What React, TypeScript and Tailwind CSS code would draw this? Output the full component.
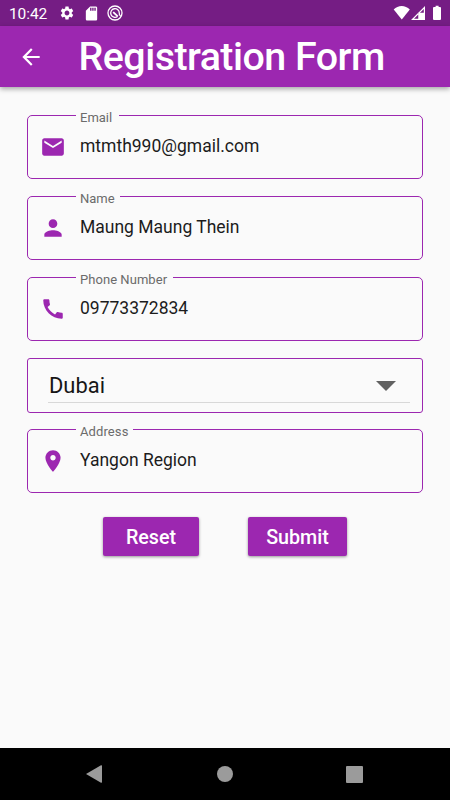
import type { ReactNode } from "react";

const icons = {
  mail: "M20 4H4c-1.1 0-1.99.9-1.99 2L2 18c0 1.1.9 2 2 2h16c1.1 0 2-.9 2-2V6c0-1.1-.9-2-2-2zm0 4l-8 5-8-5V6l8 5 8-5v2z",
  person: "M12 12c2.21 0 4-1.79 4-4s-1.79-4-4-4-4 1.79-4 4 1.79 4 4 4zm0 2c-2.67 0-8 1.34-8 4v2h16v-2c0-2.66-5.33-4-8-4z",
  phone: "M20.01 15.38c-1.23 0-2.42-.2-3.53-.56-.35-.12-.74-.03-1.01.24l-1.57 1.97c-2.83-1.35-5.48-3.9-6.89-6.83l1.95-1.66c.27-.28.35-.67.24-1.02-.37-1.11-.56-2.3-.56-3.53 0-.54-.45-.99-.99-.99H4.19C3.65 3 3 3.24 3 3.99 3 13.28 10.73 21 20.01 21c.71 0 .99-.63.99-1.18v-3.45c0-.54-.45-.99-.99-.99z",
  place: "M12 2C8.13 2 5 5.13 5 9c0 5.25 7 13 7 13s7-7.75 7-13c0-3.87-3.13-7-7-7zm0 9.5c-1.38 0-2.5-1.12-2.5-2.5s1.12-2.5 2.5-2.5 2.5 1.12 2.5 2.5-1.12 2.5-2.5 2.5z",
  back: "M20 11H7.83l5.59-5.59L12 4l-8 8 8 8 1.41-1.41L7.83 13H20v-2z",
  gear: "M19.14 12.94c.04-.3.06-.61.06-.94 0-.32-.02-.64-.07-.94l2.03-1.58c.18-.14.23-.41.12-.61l-1.92-3.32c-.12-.22-.37-.29-.59-.22l-2.39.96c-.5-.38-1.03-.7-1.62-.94l-.36-2.54c-.04-.24-.24-.41-.48-.41h-3.84c-.24 0-.43.17-.47.41l-.36 2.54c-.59.24-1.13.57-1.62.94l-2.39-.96c-.22-.08-.47 0-.59.22L2.74 8.87c-.12.21-.08.47.12.61l2.03 1.58c-.05.3-.09.63-.09.94s.02.64.07.94l-2.03 1.58c-.18.14-.23.41-.12.61l1.92 3.32c.12.22.37.29.59.22l2.39-.96c.5.38 1.03.7 1.62.94l.36 2.54c.05.24.24.41.48.41h3.84c.24 0 .44-.17.47-.41l.36-2.54c.59-.24 1.13-.56 1.62-.94l2.39.96c.22.08.47 0 .59-.22l1.92-3.32c.12-.22.07-.47-.12-.61l-2.01-1.58zM12 15.6c-1.98 0-3.6-1.62-3.6-3.6s1.62-3.6 3.6-3.6 3.6 1.62 3.6 3.6-1.62 3.6-3.6 3.6z",
  sd: "M18 2h-8L4.02 8 4 20c0 1.1.9 2 2 2h12c1.1 0 2-.9 2-2V4c0-1.1-.9-2-2-2zm-6 6h-2V4h2v4zm3 0h-2V4h2v4zm3 0h-2V4h2v4z",
};

function Icon({ d, className }: { d: string; className: string }) {
  return (
    <svg viewBox="0 0 24 24" fill="currentColor" className={`shrink-0 ${className}`}>
      <path d={d} />
    </svg>
  );
}

function Field({ label, labelClass, icon, children }: { label: string; labelClass: string; icon: string; children: ReactNode }) {
  return (
    <div className="relative flex h-16 items-start rounded-[5px] border border-[#9c27b0] pl-3">
      <span className={`absolute -top-1.5 left-12 h-4 whitespace-nowrap bg-[#fafafa] pl-1 text-[13px] leading-4 text-[#6b6b6b] ${labelClass}`}>
        {label}
      </span>
      <Icon d={icon} className="mt-[18px] size-[26px] text-[#9c27b0]" />
      <div className="ml-[14px] mt-[18px] text-[17.5px] leading-6 text-[#1c1c1c]">{children}</div>
    </div>
  );
}

function StatusBar() {
  return (
    <div className="flex h-[26px] items-center bg-[#751d84] pl-[9px] text-white">
      <span className="w-[50px] pt-[2px] text-[15.5px] leading-5 tracking-[-0.1px]">10:42</span>
      <Icon d={icons.gear} className="size-4" />
      <Icon d={icons.sd} className="ml-2 size-[17px]" />
      <svg viewBox="0 0 16 16" className="ml-[7px] size-4" fill="none" stroke="white">
        <circle cx="8" cy="8" r="7" strokeWidth="1.3" />
        <path d="M10.5 11.5A4.300 4.300 0 1 1 12.300 8.200Q12 10 13.600 11" strokeWidth="1.300" />
        <path d="M6.200 7.200l4.600 4.200" strokeWidth="1.800" />
      </svg>
      <svg viewBox="0 0 50 16" className="ml-auto mr-[7px] h-4 w-[50px]" fill="white">
        <path d="M.7 4.5C5-.2 12.300-.2 16.800 4.500L8.800 14.400Z" />
        <path fillRule="evenodd" d="M32 1v14H18zM30.800 3.900L21 13.700h4.500V8.200h5.300z" />
        <path fillRule="evenodd" d="M25.500 7.700h6.500V15h-6.500zM26.900 9v4.700h3.700V9z" />
        <path d="M42 2h1.600V.8h3V2H48q1 0 1 1v11q0 1-1 1h-6q-1 0-1-1V3q0-1 1-1Z" transform="translate(-1 0)" />
      </svg>
    </div>
  );
}

export default function App() {
  return (
    <div className="flex h-[800px] w-[450px] flex-col overflow-hidden bg-[#fafafa] font-[Roboto,sans-serif]">
      <StatusBar />
      <header className="flex h-[61px] shrink-0 items-center bg-[#9c27b0] pl-[18px] text-white shadow-[0_2px_5px_rgba(0,0,0,0.35)]">
        <Icon d={icons.back} className="size-[26px]" />
        <h1 className="ml-[34.5px] whitespace-nowrap text-[39.4px] font-medium leading-[60px] tracking-[-0.53px]">Registration Form</h1>
      </header>

      <main className="flex flex-1 flex-col px-[27px] pt-7">
        <div className="flex flex-col gap-[17px]">
          <Field label="Email" labelClass="w-[43px]" icon={icons.mail}>mtmth990@gmail.com</Field>
          <Field label="Name" labelClass="w-[44px]" icon={icons.person}>Maung Maung Thein</Field>
          <Field label="Phone Number" labelClass="w-[97px] tracking-[0.05px]" icon={icons.phone}>09773372834</Field>
        </div>
        <div className="mt-[17px] h-[55px] rounded-[3px] border border-[#9c27b0] pl-5 pr-3">
          <div className="flex h-11 items-center justify-between border-b border-[#d8d8d8] pr-[14px]">
            <span className="pl-px pt-[11px] text-[21.9px] leading-8 text-[#161616]">Dubai</span>
            <svg viewBox="0 0 20 10" className="mt-[11px] h-[10px] w-5" fill="#616161">
              <path d="M0 0h20L10 10z" />
            </svg>
          </div>
        </div>
        <div className="mt-4">
          <Field label="Address" labelClass="w-[57px] tracking-[0.1px]" icon={icons.place}>Yangon Region</Field>
        </div>
        <div className="mt-6 flex gap-[49px] pl-[76px] text-[19.7px] font-medium text-white">
          <button className="h-[39px] w-24 rounded-[2px] bg-[#9c27b0] pt-0.5 shadow-[0_1px_3px_rgba(0,0,0,0.4)]">Reset</button>
          <button className="h-[39px] w-[99px] rounded-[2px] bg-[#9c27b0] pt-0.5 shadow-[0_1px_3px_rgba(0,0,0,0.4)]">Submit</button>
        </div>
      </main>

      <nav className="flex h-[52px] shrink-0 items-center bg-black pl-[86px]">
        <svg viewBox="0 0 16 18" className="h-[18px] w-4" fill="#9b9b9b"><path d="M0 9L15 .3Q16 0 16 1v16q0 1-1 .7z" /></svg>
        <div className="ml-[115px] size-4 rounded-full bg-[#9b9b9b]" />
        <div className="ml-[113px] size-[17px] rounded-[1px] bg-[#9b9b9b]" />
      </nav>
    </div>
  );
}
